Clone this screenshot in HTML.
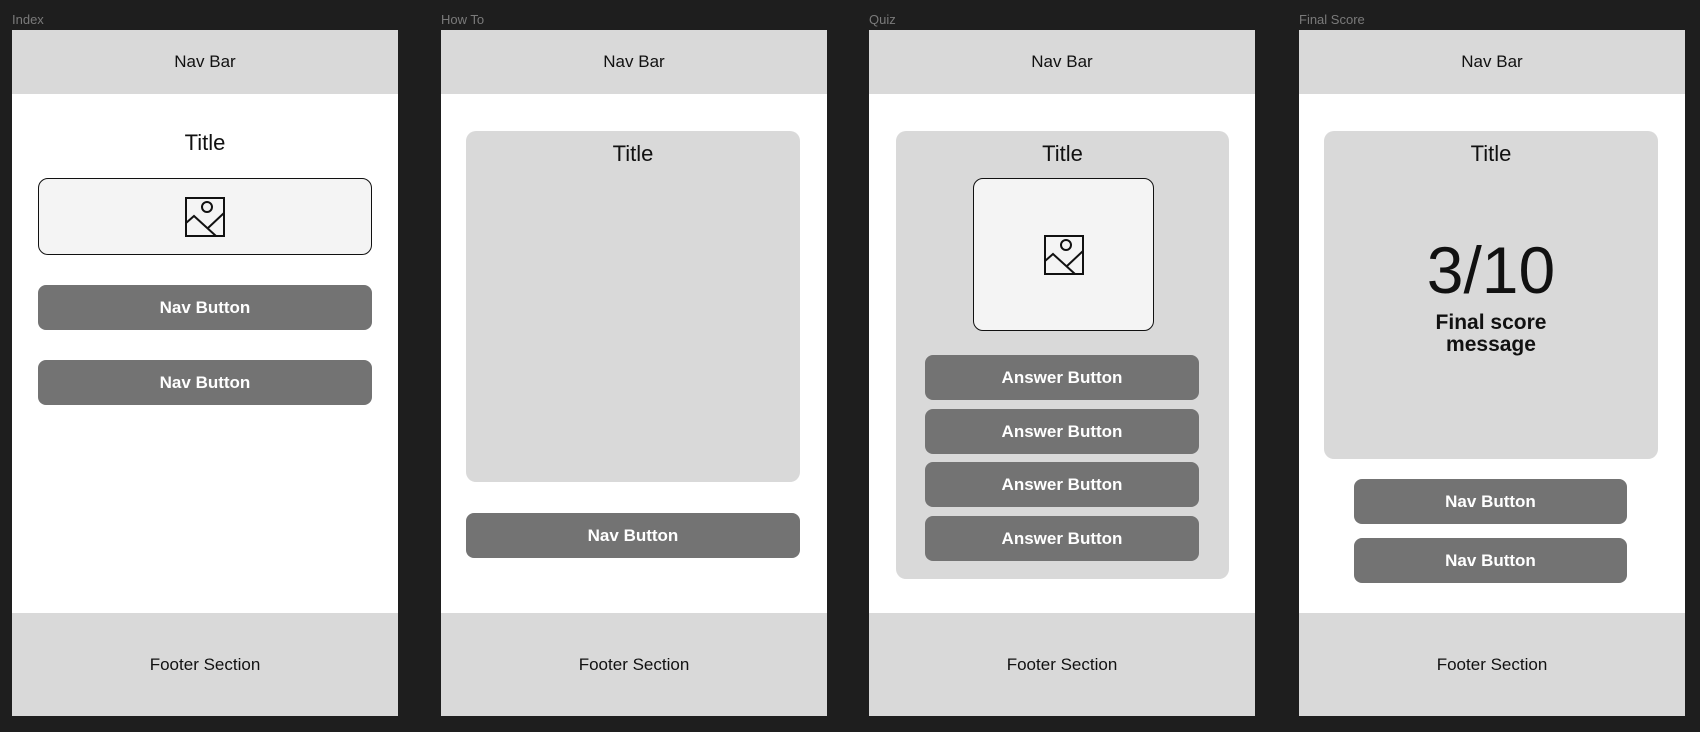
<!DOCTYPE html>
<html><head><meta charset="utf-8"><style>
*{margin:0;padding:0;box-sizing:border-box}
body{width:1700px;height:732px;background:#1e1e1e;position:relative;overflow:hidden;font-family:"Liberation Sans",sans-serif}
.a{position:absolute}
.lbl{color:#7a7a7a;font-size:13px;top:12px}
.fr{background:#fff;top:30px;width:386px;height:686px}
.nav{left:0;top:0;width:386px;height:64px;background:#d9d9d9;display:flex;align-items:center;justify-content:center;font-size:17px;color:#111}
.ft{left:0;top:583px;width:386px;height:103px;background:#d9d9d9;display:flex;align-items:center;justify-content:center;font-size:17px;color:#111}
.t{font-size:22px;color:#111;text-align:center;width:100%;left:0}
.btn{background:#737373;border-radius:8px;color:#fff;font-size:17px;font-weight:bold;display:flex;align-items:center;justify-content:center}
.panel{background:#d9d9d9;border-radius:10px}
.img{background:#f4f4f4;border:1.5px solid #111;border-radius:10px;display:flex;align-items:center;justify-content:center}
</style></head><body>
<div class="a lbl" style="left:12px">Index</div>
<div class="a lbl" style="left:441px">How To</div>
<div class="a lbl" style="left:869px">Quiz</div>
<div class="a lbl" style="left:1299px">Final Score</div>

<svg width="0" height="0" style="position:absolute"><defs><symbol id="ic" viewBox="0 0 40 40"><rect x="1" y="1" width="38" height="38" fill="none" stroke="#111" stroke-width="2"/><circle cx="22" cy="10" r="5" fill="none" stroke="#111" stroke-width="2"/><path d="M1 26 L9 19 L31 39 M23 31 L39 16" fill="none" stroke="#111" stroke-width="2"/></symbol></defs></svg>

<!-- Index -->
<div class="a fr" style="left:12px">
 <div class="a nav">Nav Bar</div>
 <div class="a t" style="top:100px">Title</div>
 <div class="a img" style="left:26px;top:148px;width:334px;height:77px"><svg width="40" height="40"><use href="#ic"/></svg></div>
 <div class="a btn" style="left:26px;top:255px;width:334px;height:45px">Nav Button</div>
 <div class="a btn" style="left:26px;top:330px;width:334px;height:45px">Nav Button</div>
 <div class="a ft">Footer Section</div>
</div>

<!-- How To -->
<div class="a fr" style="left:441px">
 <div class="a nav">Nav Bar</div>
 <div class="a panel" style="left:25px;top:101px;width:334px;height:351px"><div class="a t" style="top:10px">Title</div></div>
 <div class="a btn" style="left:25px;top:483px;width:334px;height:45px">Nav Button</div>
 <div class="a ft">Footer Section</div>
</div>

<!-- Quiz -->
<div class="a fr" style="left:869px">
 <div class="a nav">Nav Bar</div>
 <div class="a panel" style="left:27px;top:101px;width:333px;height:448px">
  <div class="a t" style="top:10px">Title</div>
  <div class="a img" style="left:77px;top:47px;width:181px;height:153px"><svg width="40" height="40"><use href="#ic"/></svg></div>
  <div class="a btn" style="left:29px;top:224px;width:274px;height:45px">Answer Button</div>
  <div class="a btn" style="left:29px;top:278px;width:274px;height:45px">Answer Button</div>
  <div class="a btn" style="left:29px;top:331px;width:274px;height:45px">Answer Button</div>
  <div class="a btn" style="left:29px;top:385px;width:274px;height:45px">Answer Button</div>
 </div>
 <div class="a ft">Footer Section</div>
</div>

<!-- Final Score -->
<div class="a fr" style="left:1299px">
 <div class="a nav">Nav Bar</div>
 <div class="a panel" style="left:25px;top:101px;width:334px;height:328px">
  <div class="a t" style="top:10px">Title</div>
  <div class="a" style="left:0;width:100%;top:104px;text-align:center;font-size:66px;color:#111;line-height:70px">3/10</div>
  <div class="a" style="left:0;width:100%;top:181px;text-align:center;font-size:21px;font-weight:bold;color:#111;line-height:22px">Final score<br>message</div>
 </div>
 <div class="a btn" style="left:55px;top:449px;width:273px;height:45px">Nav Button</div>
 <div class="a btn" style="left:55px;top:508px;width:273px;height:45px">Nav Button</div>
 <div class="a ft">Footer Section</div>
</div>
</body></html>
